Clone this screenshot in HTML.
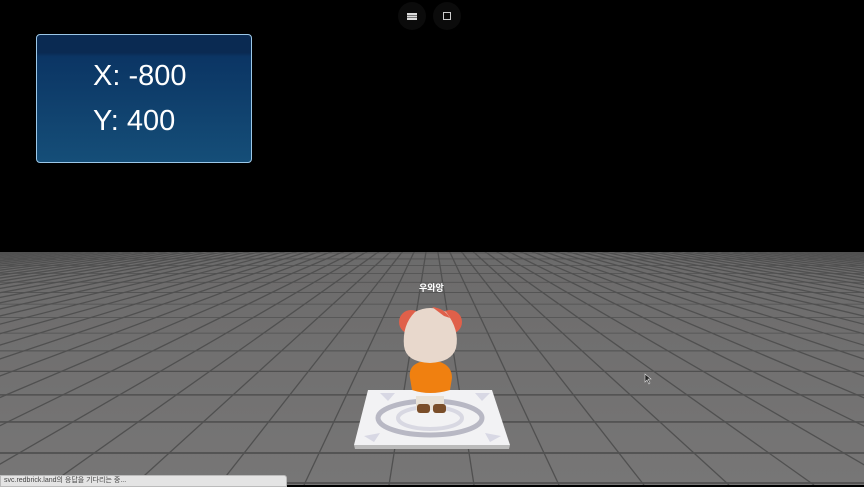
<!DOCTYPE html>
<html><head><meta charset="utf-8"><style>
html,body{margin:0;padding:0;width:864px;height:485px;overflow:hidden;background:#000;font-family:"Liberation Sans","Noto Sans CJK KR",sans-serif}
#floor{position:absolute;left:0;top:252px}
.panel{position:absolute;left:36px;top:34px;width:216px;height:129px;border:1.5px solid #9cc8e8;border-radius:4px;background:linear-gradient(#0a2a52 0,#0a2a52 14%,#0b3564 17%,#154e78 100%);box-sizing:border-box}
.panel .t{position:absolute;left:56px;color:#fff;font-size:29px}
.btn{position:absolute;top:2px;width:28px;height:28px;border-radius:50%;background:#0b0b0b}
.status{position:absolute;left:0;top:475px;width:287px;height:12px;background:#e4e4e4;border:1px solid #bbb;border-radius:0 3px 0 0;font-size:7px;color:#444;line-height:10px;padding-left:3px;box-sizing:border-box}
</style></head><body>
<svg id="floor" width="864" height="233" viewBox="0 0 864 233"></svg>
<div class="panel"><div class="t" style="top:25px">X: -800</div><div class="t" style="top:70px">Y: 400</div></div>
<div class="btn" style="left:398px"><div style="position:absolute;left:9px;top:11px;width:10px;height:1.5px;background:#ddd;box-shadow:0 2.5px #ddd,0 5px #ddd"></div></div>
<div class="btn" style="left:433px"><div style="position:absolute;left:10px;top:10px;width:6px;height:6px;border:1.5px solid #ccc"></div></div>
<div style="position:absolute;left:419px;top:281px;color:#fff;font-size:9px;font-weight:bold">우와앙</div>
<svg style="position:absolute;left:340px;top:300px" width="180" height="150" viewBox="0 0 180 150">
<polygon points="28,90 152,90 170,145 14,145" fill="#f2f2f4"/>
<polygon points="14,145 170,145 169,149 15,149" fill="#bbb"/>
<ellipse cx="90" cy="118" rx="52" ry="17" fill="none" stroke="#b8b8c4" stroke-width="5"/>
<ellipse cx="90" cy="118" rx="32" ry="11" fill="none" stroke="#d8d8e2" stroke-width="4"/>
<polygon points="40,93 55,93 48,101" fill="#d8d8e4"/><polygon points="135,93 150,93 142,101" fill="#d8d8e4"/>
<polygon points="24,136 40,133 34,142" fill="#d8d8e4"/><polygon points="145,133 161,136 150,142" fill="#d8d8e4"/>
<rect x="76" y="96" width="28" height="14" fill="#e8e2d8"/>
<rect x="77" y="104" width="13" height="9" rx="3" fill="#7a4e2a"/><rect x="93" y="104" width="13" height="9" rx="3" fill="#7a4e2a"/>
<path d="M70 78 Q68 66 80 62 L100 62 Q112 66 112 78 L110 90 Q90 96 72 90 Z" fill="#f08010"/>
<ellipse cx="71" cy="22" rx="12" ry="12" fill="#e0604a"/><ellipse cx="110" cy="22" rx="12" ry="12" fill="#e0604a"/>
<path d="M75 12 Q90 4 106 12 Q120 30 116 48 Q112 62 90 63 Q66 62 64 46 Q62 25 75 12Z" fill="#e8d8cc"/>
<path d="M92 7 Q104 8 110 18 L104 16Z" fill="#e0604a"/>
</svg>
<div class="status">svc.redbrick.land의 응답을 기다리는 중...</div>
<script>
var s=document.getElementById('floor'),h='<defs><linearGradient id="g" x1="0" y1="0" x2="0" y2="1"><stop offset="0" stop-color="#6c6b6b"/><stop offset="1" stop-color="#777676"/></linearGradient></defs><rect width="864" height="233" fill="url(#g)"/>';
var y=201;
while(y>0){var w=Math.max(0.8,Math.min(1.8,y/100));h+='<line x1="0" x2="864" y1="'+y.toFixed(2)+'" y2="'+y.toFixed(2)+'" stroke="#505050" stroke-width="'+w.toFixed(2)+'"/>';y-=Math.max(6,0.13*(y+38));}
h+='<line x1="0" x2="864" y1="231" y2="231" stroke="#505050" stroke-width="1.8"/>';
var vy=-38;
for(var k=-60;k<=60;k++){var xb=432+42+k*85;h+='<line x1="432" y1="'+vy+'" x2="'+xb+'" y2="233" stroke="#505050" stroke-width="1.3"/>';}
s.innerHTML=h;
</script>
<svg style="position:absolute;left:644px;top:373px" width="10" height="12"><path d="M1 1 L1 9 L3 7 L5 11 L6 10 L4 6 L7 6Z" fill="#222" stroke="#ddd" stroke-width=".6"/></svg>
</body></html>
